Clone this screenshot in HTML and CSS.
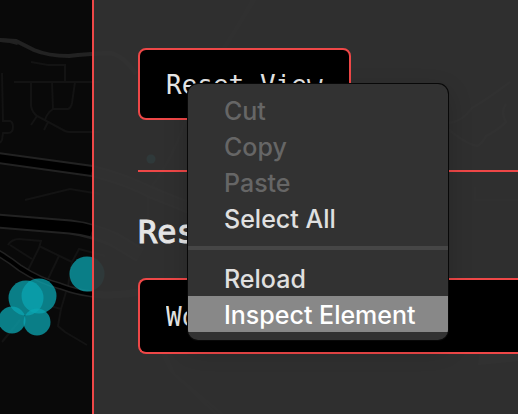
FILE: index.html
```html
<!DOCTYPE html>
<html lang="en">
<head>
<meta charset="utf-8">
<title>Map</title>
<link rel="stylesheet" href="styles.css">
</head>
<body>
<svg class="map" aria-hidden="true">
  <g class="street">
    <path d="M31 62 48 65H65V82M14 82H100M31 82V106Q32 112 37 116L65 131Q67 132 70 132H100M52 82 53 109H68Q71 108 72 103L75 82M53 109Q47 113 45 120M37 116 31 125M48 122 44 130M2 73 3 121H10Q13 122 13 127 13 133 8 133H3L2 140 0 143M25 200 70 189 100 194"/>
    <path d="M8 245Q12 239 19 239L41 241 39 248 28 270M10 245 32 259M39 246 72 262M59 256 48 279M72 262 79 249 105 256M72 262 68 286M66 292 61 309M50 306 61 309 58 326 65 332 87 345M20 320 2 342"/>
    <path class="faint" d="M252 0Q236 30 216 58L196 84Q180 150 152 186M255 0 219 58 199 86M148 195V220M152 186 190 208M157 278 163 348 174 374 222 414M155 278 160 348 170 370 216 414M475 187V200H518"/>
  </g>
  <path class="river" d="M-2 40Q8 40 18 43"/>
  <path class="river" d="M-2 40 16 41 34 50Q48 56 69 56 86 54 110 53 123 55 136 74"/>
  <path class="river thin" d="M448 123Q462 122 472 108 486 100 510 82M448 129Q466 144 477 146 482 144 486 136 498 130 506 122 500 112 506 104 518 93M448 183Q475 176 518 171M448 191Q475 184 518 177"/>
  <path class="road-edge" d="M-2 158 92 171Q125 179 150 192L190 208"/>
  <path class="road" d="M-2 158 92 171"/>
  <path class="road covered" d="M92 171Q125 179 150 192L190 208"/>
  <path class="road-edge wide" d="M-2 221 70 227Q92 230 115 240L140 255"/>
  <path class="road wide-core" d="M-2 221 70 227Q82 228 92 231"/>
  <path class="road wide-core covered" d="M92 231Q104 234 115 240L140 255"/>
  <path class="road-edge small" d="M-2 253Q10 260 20 268 40 281 60 286 80 294 105 295 130 295 145 290"/>
  <path class="road small-core" d="M-2 253Q10 260 20 268 40 281 60 286 76 292 92 294"/>
  <path class="block" d="M480 352H518V361L478 365Z"/>
  <g class="marker">
    <circle cx="26" cy="298" r="17.5"/>
    <circle cx="39" cy="296" r="17.5"/>
    <circle cx="12" cy="320" r="13.5"/>
    <circle cx="37" cy="322" r="13.5"/>
    <circle cx="87" cy="274" r="17.5"/>
    <circle cx="151" cy="159" r="4.5"/>
  </g>
</svg>
<main class="panel">
  <button class="control reset" type="button">Reset View</button>
  <hr class="rule">
  <h2 class="heading"><label for="field">Res</label></h2>
  <input class="control field" id="field" type="text" value="Wo">
</main>
<div class="menu" role="menu">
  <button class="item" type="button" role="menuitem" disabled>Cut</button>
  <button class="item" type="button" role="menuitem" disabled>Copy</button>
  <button class="item" type="button" role="menuitem" disabled>Paste</button>
  <button class="item" type="button" role="menuitem">Select All</button>
  <hr class="separator">
  <button class="item" type="button" role="menuitem">Reload</button>
  <button class="item active" type="button" role="menuitem">Inspect Element</button>
</div>
</body>
</html>
```
FILE: styles.css
```css
* { box-sizing: border-box; }

body {
  margin: 0;
  background: #090909;
  color: #e6e6e6;
  font-family: "DejaVu Sans Mono", monospace;
  overflow: hidden;
}

.map {
  position: absolute;
  inset: 0;
  width: 100%;
  height: 100%;
  fill: none;
}

.street { stroke: #131313; stroke-width: 2; }
.faint { stroke: #181818; }
.river { stroke: #222; stroke-width: 4; }
.thin { stroke-width: 2; }
.road-edge { stroke: #222; stroke-width: 12; }
.road { stroke: #000; stroke-width: 8; }
.wide { stroke-width: 15; }
.wide-core { stroke-width: 11; }
.small { stroke-width: 7; }
.small-core { stroke-width: 4; }
.covered { stroke: #111; }
.block { fill: #222; }
.marker { fill: #0ba5b2; fill-opacity: 0.75; }

.panel {
  position: relative;
  min-height: 100vh;
  margin-left: 92px;
  padding: 48px 0 48px 44px;
  border-left: 2px solid #ee4747;
  background: rgba(51, 51, 51, 0.92);
}

.control {
  display: block;
  border: 2px solid #ee4747;
  border-radius: 8px;
  background: #000;
  color: #e6e6e6;
  font: 26px/32px "DejaVu Sans Mono", monospace;
}

.reset { padding: 19px 26px 17px; }

.rule {
  height: 2px;
  margin: 50px 0 40px;
  border: 0;
  background: #ee4747;
}

.heading {
  margin: 0 0 26px;
  font-size: 32px;
  font-weight: 400;
  line-height: 40px;
  -webkit-text-stroke: 1px currentColor;
}

.field {
  width: 100%;
  height: 76px;
  padding: 19px 26px 17px;
  border-right: 0;
  border-radius: 8px 0 0 8px;
}

.menu {
  position: absolute;
  top: 84px;
  left: 188px;
  width: 260px;
  padding: 8px 0;
  border-radius: 10px;
  overflow: hidden;
  background: #323232;
  box-shadow: 0 0 0 1px #080808, 0 8px 24px rgba(0, 0, 0, 0.2);
}

.item {
  display: block;
  width: 100%;
  height: 36px;
  padding: 2px 36px 0;
  border: 0;
  background: none;
  color: #e0e0e0;
  font: 500 25px/34px Inter, sans-serif;
  text-align: left;
  white-space: nowrap;
}

.item:disabled { color: #666; }

.active {
  background: #888;
  color: #fff;
}

.separator {
  height: 4px;
  margin: 10px 0;
  border: 0;
  background: #464646;
}
```
